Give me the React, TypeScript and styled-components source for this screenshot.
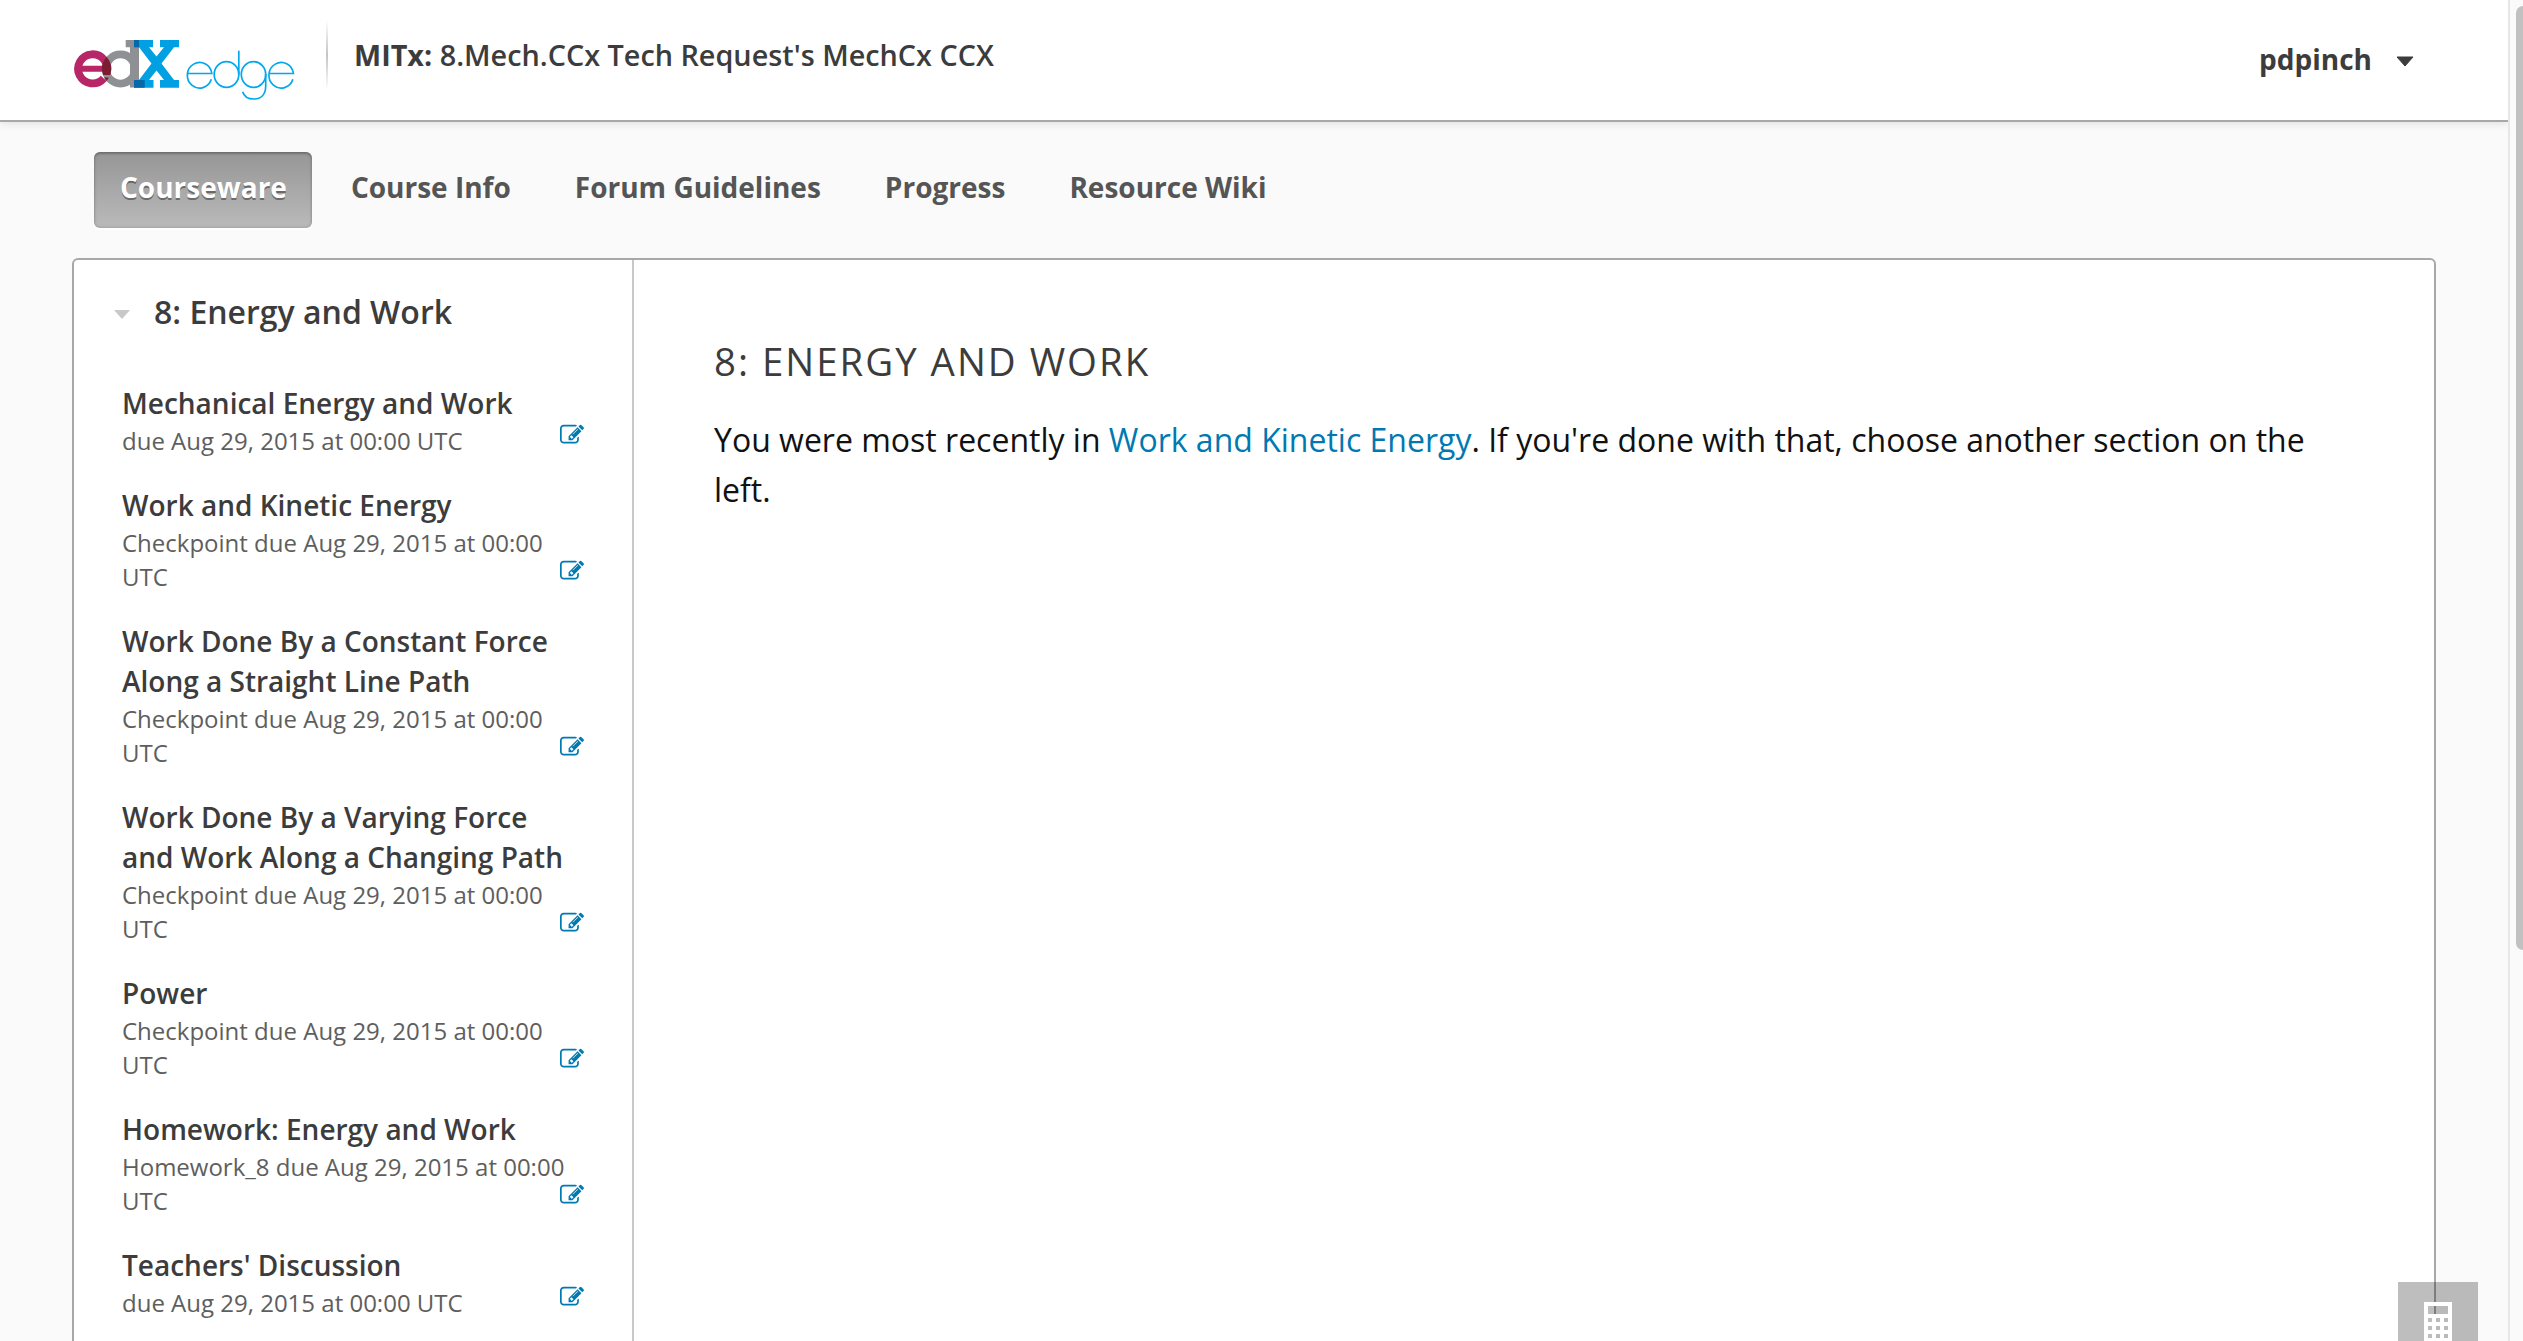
import React from "react";
import styled, { createGlobalStyle, css } from "styled-components";

const GlobalStyle = createGlobalStyle`
  * { box-sizing: border-box; }
  html, body { margin: 0; padding: 0; }
  body {
    background: #fafafa;
    font-family: "Open Sans", "Noto Sans", sans-serif;
    color: #3c3c3c;
    overflow: hidden;
  }
  h1, h2, h3, p, ul { margin: 0; padding: 0; }
  ul { list-style: none; }
  a { color: inherit; text-decoration: none; }
`;

const Viewport = styled.div`
  display: flex;
  width: 2523px;
  height: 1341px;
  overflow: hidden;
`;

const Page = styled.div`
  display: flex;
  flex-direction: column;
  width: 2508px;
  height: 100%;
`;

const ScrollTrack = styled.div`
  width: 15px;
  height: 100%;
  border-left: 2px solid #e7e7e7;
  background: #fafafa;
  padding: 6px 0 0 6px;
  overflow: hidden;
`;

const ScrollThumb = styled.div`
  width: 14px;
  height: 944px;
  border-radius: 7px;
  background: #c1c1c1;
`;

const Header = styled.header`
  display: flex;
  align-items: flex-start;
  height: 122px;
  flex: none;
  padding: 0 94px 0 74px;
  background: #fff;
  border-bottom: 2px solid #a8a8a8;
  box-shadow: 0 2px 8px rgba(0, 0, 0, 0.1);
`;

const LogoLink = styled.a`
  display: block;
  margin-top: 40px;
  height: 62px;
  svg { display: block; }
`;

const Divider = styled.div`
  width: 2px;
  height: 70px;
  margin: 20px 0 0 31px;
  background: linear-gradient(rgba(200, 200, 200, 0), #c4c4c4, rgba(200, 200, 200, 0));
`;

const CourseTitle = styled.h2`
  margin: 34px 0 0 26px;
  font-size: 28.8px;
  line-height: 42px;
  font-weight: 600;
  white-space: nowrap;
  span { font-weight: 700; }
`;

const UserMenu = styled.a`
  display: flex;
  align-items: center;
  gap: 24px;
  margin: 38px 0 0 auto;
  font-size: 28px;
  line-height: 42px;
  font-weight: 700;
  svg { margin-top: 5px; }
`;

const Nav = styled.nav`
  display: flex;
  flex: none;
  gap: 13px;
  padding: 30px 0 0 94px;
  height: 136px;
`;

const Tab = styled.a<{ $active?: boolean }>`
  display: block;
  height: 76px;
  padding: 0 25px 0 26px;
  border-radius: 6px;
  font-size: 28px;
  line-height: 71px;
  font-weight: 700;
  color: #555;
  white-space: nowrap;
  ${(p) =>
    p.$active &&
    css`
      color: #fff;
      background: linear-gradient(#969696, #bababa);
      text-shadow: 0 2px 0 rgba(0, 0, 0, 0.4);
      box-shadow: 0 2px 0 #fff, inset 0 0 3px 1px rgba(0, 0, 0, 0.12), inset 0 2px 2px rgba(0, 0, 0, 0.2);
    `}
`;

const Card = styled.main`
  display: flex;
  flex: none;
  width: 2364px;
  height: 1200px;
  margin-left: 72px;
  background: #fff;
  border: 2px solid #a8a8a8;
  border-radius: 6px;
`;

const Sidebar = styled.aside`
  width: 560px;
  flex: none;
  border-right: 2px solid #c8c8c8;
`;

const Chapter = styled.h3`
  display: flex;
  align-items: center;
  gap: 24px;
  height: 50px;
  margin: 27px 0 0 40px;
  font-size: 32px;
  line-height: 50px;
  font-weight: 600;
  white-space: nowrap;
  svg { margin-top: 5px; }
`;

const SectionList = styled.ul`
  padding: 46px 50px 0 48px;
`;

const Section = styled.li`
  position: relative;
  width: 462px;
  margin-bottom: 27px;
`;

const SectionName = styled.p`
  font-size: 28px;
  line-height: 40px;
  font-weight: 600;
`;

const SectionDue = styled.p`
  && { padding: 1px 10px 0 0; }
  font-size: 24px;
  line-height: 34px;
  color: #5e5e5e;
`;

const EditBadge = styled.svg`
  position: absolute;
  right: 0;
  bottom: 11px;
  width: 24px;
  height: 24px;
  fill: #0079b2;
`;

const Content = styled.section`
  flex: 1;
  padding: 76px 80px 0 80px;
`;

const Heading = styled.h1`
  font-size: 38.4px;
  line-height: 50px;
  font-weight: 400;
  letter-spacing: 2px;
  text-transform: uppercase;
  color: #3c3c3c;
`;

const Paragraph = styled.p`
  && { margin-top: 29px; }
  font-size: 32px;
  line-height: 50px;
  color: #111;
  a { color: #0079b2; }
`;

const CalculatorButton = styled.div`
  position: absolute;
  left: 2398px;
  top: 1282px;
  width: 80px;
  height: 59px;
  padding: 20px 26px 0;
  background: rgba(0, 0, 0, 0.255);
  overflow: hidden;
`;

const sections = [
  { name: "Mechanical Energy and Work", due: "due Aug 29, 2015 at 00:00 UTC" },
  { name: "Work and Kinetic Energy", due: "Checkpoint due Aug 29, 2015 at 00:00 UTC" },
  { name: "Work Done By a Constant Force Along a Straight Line Path", due: "Checkpoint due Aug 29, 2015 at 00:00 UTC" },
  { name: "Work Done By a Varying Force and Work Along a Changing Path", due: "Checkpoint due Aug 29, 2015 at 00:00 UTC" },
  { name: "Power", due: "Checkpoint due Aug 29, 2015 at 00:00 UTC" },
  { name: "Homework: Energy and Work", due: "Homework_8 due Aug 29, 2015 at 00:00 UTC" },
  { name: "Teachers' Discussion", due: "due Aug 29, 2015 at 00:00 UTC" },
];

const tabs = ["Courseware", "Course Info", "Forum Guidelines", "Progress", "Resource Wiki"];

const Logo = () => (
  <svg width="221" height="62" viewBox="74 40 221 62" fill="none">
    <circle cx="120.500" cy="69" r="14.600" stroke="#8e9093" strokeWidth="7.800" />
    <path d="M125.700 40H139V87.500H130V47.300H125.700Z" fill="#8e9093" />
    <path
      d="M134 40H153V47.300H149L156.500 56.500L164 47.300H160V40H179V47.300H174L161.500 63.500L174 80H179V87.700H160V80H164L156.500 70.500L149 80H153.500V87.700H134V80H139L151.500 63.500L139 47.300H134Z"
      fill="#00a0e3"
    />
    <path d="M134 40H139V47.300H134ZM134 80H144.700V87.700H134Z" fill="#0668a8" />
    <path d="M76 68.700H110" stroke="#b72667" strokeWidth="6" />
    <path d="M106.500 73.500A14.600 14.600 0 1 0 103.700 78.400" stroke="#b72667" strokeWidth="7.800" />
    <path d="M106.500 56.900A18.500 18.500 0 0 1 110.200 75H103A18.500 18.500 0 0 1 106.500 56.900ZM104 77.500H109A18.500 18.500 0 0 1 106.500 81Z" fill="#7b1d30" />
    <g stroke="#00a8ec" strokeWidth="1.700">
      <path d="M187.200 73.500H211.800A12.300 12.800 0 1 0 211.300 79.300" />
      <ellipse cx="226.500" cy="74.500" rx="12.300" ry="12.800" />
      <path d="M238.800 50.700V74.500" />
      <ellipse cx="253.500" cy="74.500" rx="12.200" ry="12.800" />
      <path d="M265.700 74V86C265.700 94.500 261 99 254 99C248 99 244 96.500 242.700 91.700" />
      <path d="M268.800 73.500H293.400A12.300 12.800 0 1 0 292.900 79.300" />
    </g>
  </svg>
);

const EditIcon = () => (
  <EditBadge viewBox="0 0 1792 1792">
    <path d="M888 1184l116-116-152-152-116 116v56h96v96h56zm440-720q-16-16-33 1l-350 350q-17 17-1 33t33-1l350-350q17-17 1-33zm80 594v190q0 119-84.500 203.500t-203.500 84.500h-832q-119 0-203.500-84.500t-84.500-203.500v-832q0-119 84.500-203.500t203.500-84.500h832q63 0 117 25 15 7 18 23 3 17-9 29l-49 49q-14 14-32 8-23-6-45-6h-832q-66 0-113 47t-47 113v832q0 66 47 113t113 47h832q66 0 113-47t47-113v-126q0-13 9-22l64-64q15-15 35-7t20 29zm-96-738l288 288-672 672h-288v-288zm444 132l-92 92-288-288 92-92q28-28 68-28t68 28l152 152q28 28 28 68t-28 68z" />
  </EditBadge>
);

const CalculatorIcon = () => (
  <svg width="28" height="40" viewBox="0 0 28 40" display="block">
    <path
      fill="#fff"
      fillRule="evenodd"
      d="M0 0H28V40H0ZM4 4V12H24V4ZM4 16V20H8V16ZM12 16V20H16V16ZM20 16V20H24V16ZM4 24V28H8V24ZM12 24V28H16V24ZM20 24V28H24V24ZM4 32V36H8V32ZM12 32V36H16V32ZM20 32V36H24V32Z"
    />
  </svg>
);

export default function App() {
  return (
    <>
      <GlobalStyle />
      <Viewport>
        <Page>
          <Header>
            <LogoLink href="#"><Logo /></LogoLink>
            <Divider />
            <CourseTitle><span>MITx:</span> 8.Mech.CCx Tech Request's MechCx CCX</CourseTitle>
            <UserMenu href="#">
              pdpinch
              <svg width="18" height="11" viewBox="0 0 18 11">
                <path d="M1 1H17L9 10Z" fill="#3c3c3c" stroke="#3c3c3c" strokeLinejoin="round" />
              </svg>
            </UserMenu>
          </Header>
          <Nav>
            {tabs.map((t, i) => (
              <Tab key={t} href="#" $active={i === 0}>{t}</Tab>
            ))}
          </Nav>
          <Card>
            <Sidebar>
              <Chapter>
                <svg width="16" height="9" viewBox="0 0 16 9"><path d="M0 0H16L8 9Z" fill="#c8c8c8" /></svg>
                8: Energy and Work
              </Chapter>
              <SectionList>
                {sections.map((s) => (
                  <Section key={s.name}>
                    <SectionName>{s.name}</SectionName>
                    <SectionDue>{s.due}</SectionDue>
                    <EditIcon />
                  </Section>
                ))}
              </SectionList>
            </Sidebar>
            <Content>
              <Heading>8: Energy and Work</Heading>
              <Paragraph>
                You were most recently in <a href="#">Work and Kinetic Energy</a>. If you're done with that, choose
                another section on the left.
              </Paragraph>
            </Content>
          </Card>
        </Page>
        <ScrollTrack><ScrollThumb /></ScrollTrack>
      </Viewport>
      <CalculatorButton><CalculatorIcon /></CalculatorButton>
    </>
  );
}
